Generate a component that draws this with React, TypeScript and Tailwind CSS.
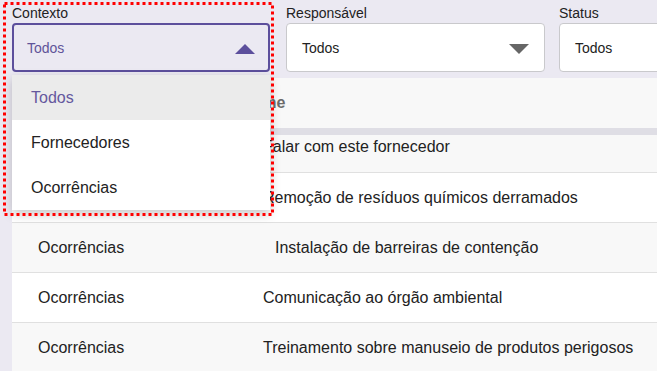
import React from 'react';

interface Row {
  context: string;
  name: string;
  indent?: boolean;
}

const rows: Row[] = [
  { context: 'Fornecedores', name: 'Falar com este fornecedor' },
  { context: 'Ocorrências', name: 'Remoção de resíduos químicos derramados' },
  { context: 'Ocorrências', name: 'Instalação de barreiras de contenção', indent: true },
  { context: 'Ocorrências', name: 'Comunicação ao órgão ambiental' },
  { context: 'Ocorrências', name: 'Treinamento sobre manuseio de produtos perigosos' },
];

function Caret({ up, color }: { up?: boolean; color: string }) {
  return (
    <svg width="20" height="10" viewBox="0 0 20 10" className="shrink-0">
      <path d={up ? 'M0 10 L10 0 L20 10 Z' : 'M0 0 L20 0 L10 10 Z'} fill={color} />
    </svg>
  );
}

export default function App() {
  const options = ['Todos', 'Fornecedores', 'Ocorrências'];

  return (
    <div className="relative w-[657px] h-[371px] overflow-hidden bg-[#ebe9f2] font-['Liberation_Sans',Arial,sans-serif] text-[#222]">
      {/* filters */}
      <div className="flex pl-[12px] pt-[5px]">
        <div className="w-[258px] shrink-0">
          <div className="text-[14px] leading-[16px] mb-[2px] text-[#222]">Contexto</div>
          <div className="h-[49px] rounded-[4px] border-2 border-[#5c4f9c] flex items-center justify-between pl-[13px] pr-[13px] pt-[2px]">
            <span className="text-[14px] text-[#5f5499]">Todos</span>
            <Caret up color="#5c4f9c" />
          </div>
        </div>
        <div className="w-[259px] shrink-0 ml-[16px]">
          <div className="text-[14px] leading-[16px] mb-[2px]">Responsável</div>
          <div className="h-[49px] rounded-[4px] border border-[#c9c9cc] bg-white flex items-center justify-between pl-[15px] pr-[15px] pt-[2px]">
            <span className="text-[14px]">Todos</span>
            <Caret color="#666" />
          </div>
        </div>
        <div className="w-[120px] shrink-0 ml-[14px]">
          <div className="text-[14px] leading-[16px] mb-[2px]">Status</div>
          <div className="h-[49px] rounded-[4px] border border-[#c9c9cc] bg-white flex items-center pl-[15px] pt-[2px]">
            <span className="text-[14px]">Todos</span>
          </div>
        </div>
      </div>

      {/* table */}
      <div className="ml-[12px] mt-[6px] bg-white">
        <div className="h-[50px] bg-[#f8f8f8] flex items-center text-[16px] font-bold text-[#6b6b6b]">
          <div className="w-[229px] pl-[26px] shrink-0">Contexto</div>
          <div>Nome</div>
        </div>
        <div className="h-[7px] bg-[#dfdee5]" />
        {rows.map((r, i) => (
          <div
            key={i}
            className={
              'flex items-center text-[16px] text-[#222] border-b border-[#e0e0e0] ' +
              (i === 0 ? 'h-[38px] pb-[13px] ' : 'h-[50px] ') +
              (i % 2 === 0 ? 'bg-[#f8f8f8]' : 'bg-white')
            }
          >
            <div className="w-[251px] pl-[26px] shrink-0">{r.context}</div>
            <div className={r.indent ? 'pl-[12px]' : ''}>{r.name}</div>
          </div>
        ))}
      </div>

      {/* open dropdown menu */}
      <div className="absolute left-[12px] top-[75px] w-[258px] bg-white shadow-[0_4px_10px_rgba(0,0,0,0.22)]">
        {options.map((o, i) => (
          <div
            key={o}
            className={
              'h-[45px] flex items-center pl-[19px] text-[16px] ' +
              (i === 0 ? 'bg-[#ebebeb] text-[#65589e]' : 'text-[#222]')
            }
          >
            {o}
          </div>
        ))}
      </div>

      {/* annotation */}
      <svg className="absolute left-0 top-0 pointer-events-none" width="280" height="222">
        <rect x="4.5" y="3.5" width="268" height="211" fill="none" stroke="#f00" strokeWidth="3" strokeDasharray="3 3" />
      </svg>
    </div>
  );
}
